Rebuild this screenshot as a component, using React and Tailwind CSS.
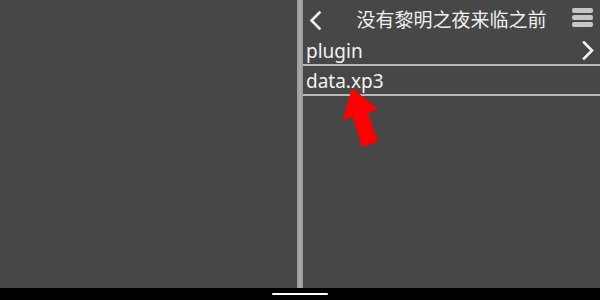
export default function App() {
  const latin = { fontFamily: '"Noto Sans", "Noto Sans CJK SC", sans-serif' };
  return (
    <div className="w-[600px] h-[300px] flex flex-col bg-[#474747] overflow-hidden" style={latin}>
      <div className="flex-1 flex min-h-0">
        <div className="w-[297px] bg-[#474747]" />
        <div className="w-[6px] bg-[#9d9d9d] flex justify-center">
          <div className="w-[2px] bg-[#ababab]" />
        </div>
        <div className="flex-1 relative flex flex-col">
          <div className="h-[35px] grid grid-cols-[40px_1fr_40px]">
            <div className="flex items-start pt-[11px] pl-[6px]">
              <svg width="12" height="19" viewBox="0 0 12 19">
                <polyline points="10.5,1.5 2.5,9.5 10.5,17.5" fill="none" stroke="#f2f2f2" strokeWidth="2.6" strokeLinecap="square" />
              </svg>
            </div>
            <div className="flex items-center justify-center pt-[3px] text-[19px] text-[#f0f0f0] whitespace-nowrap" style={{ fontFamily: '"Noto Sans CJK SC", "Noto Sans", sans-serif' }}>
              没有黎明之夜来临之前
            </div>
            <div className="flex flex-col items-end pt-[8px] pr-[7px] gap-[2.5px]">
              <div className="w-[21px] h-[4.5px] rounded-[2px] bg-[#c6c6c6]" />
              <div className="w-[21px] h-[4.5px] rounded-[2px] bg-[#c6c6c6]" />
              <div className="w-[21px] h-[4.5px] rounded-[2px] bg-[#c6c6c6]" />
            </div>
          </div>
          <div className="h-[29px] flex items-end justify-between pl-[3px] pr-[5px] pb-[2px]">
            <span className="text-[19px] leading-[22px] text-[#f2f2f2]">plugin</span>
            <svg width="13" height="19" viewBox="0 0 13 19" className="mb-[2px]">
              <polyline points="2,1.5 10,9.5 2,17.5" fill="none" stroke="#f2f2f2" strokeWidth="2.6" strokeLinecap="square" />
            </svg>
          </div>
          <div className="h-[2px] bg-[#b8b8b8]" />
          <div className="h-[28px] flex items-end pl-[3px] pb-[2px]">
            <span className="text-[19px] leading-[22px] text-[#f2f2f2]">data.xp3</span>
          </div>
          <div className="h-[2px] bg-[#b8b8b8]" />
          <svg className="absolute left-0 top-0" width="100" height="160" viewBox="0 0 100 160">
            <polygon points="49,88 75,109 65,113 75,142 59,147 50,117 40,120" fill="#ff0000" />
          </svg>
        </div>
      </div>
      <div className="h-[12px] bg-black flex justify-center">
        <div className="mt-[5px] w-[56px] h-[2px] bg-white rounded-full" />
      </div>
    </div>
  );
}
